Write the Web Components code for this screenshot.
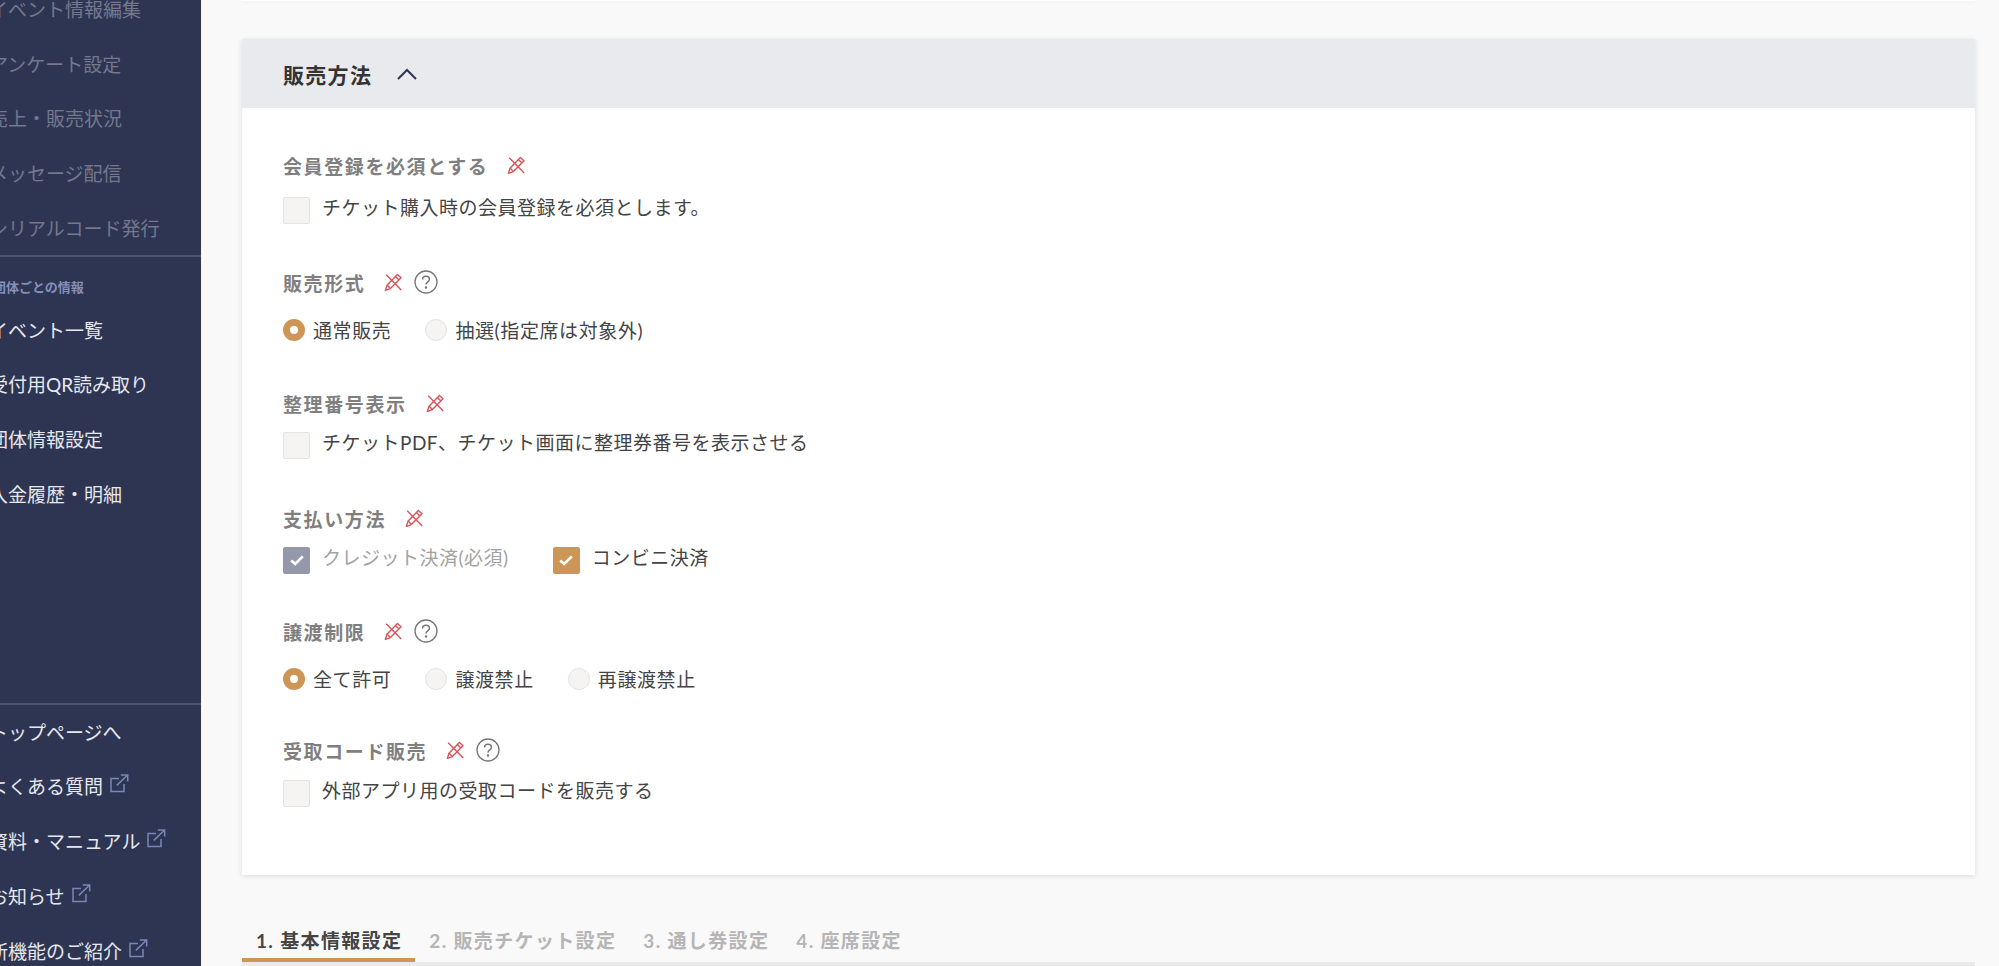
<!DOCTYPE html>
<html lang="ja">
<head>
<meta charset="utf-8">
<title>販売方法</title>
<style>
  html, body { margin: 0; height: 100%; overflow: hidden; }
  body {
    font-family: Lato, "Noto Sans CJK JP", sans-serif;
    background: #f9f9f9;
  }
</style>
</head>
<body>
<app-shell>
  <side-nav slot="nav"></side-nav>
  <top-sliver></top-sliver>
  <sales-panel heading="販売方法">
    <form-field label="会員登録を必須とする" style="--gap:19px">
      <check-box>チケット購入時の会員登録を必須とします。</check-box>
    </form-field>
    <form-field label="販売形式" help style="--top:45px;--gap:21px">
      <radio-item on>通常販売</radio-item>
      <radio-item>抽選(指定席は対象外)</radio-item>
    </form-field>
    <form-field label="整理番号表示" style="--top:47px;--gap:16px">
      <check-box>チケットPDF、チケット画面に整理券番号を表示させる</check-box>
    </form-field>
    <form-field label="支払い方法" style="--top:46px;--gap:16px;--ctl-gap:44px">
      <check-box state="locked">クレジット決済(必須)</check-box>
      <check-box state="on">コンビニ決済</check-box>
    </form-field>
    <form-field label="譲渡制限" help style="--top:44px;--gap:21px">
      <radio-item on>全て許可</radio-item>
      <radio-item>譲渡禁止</radio-item>
      <radio-item>再譲渡禁止</radio-item>
    </form-field>
    <form-field label="受取コード販売" help style="--top:45px;--gap:17px">
      <check-box>外部アプリ用の受取コードを販売する</check-box>
    </form-field>
  </sales-panel>
  <step-tabs></step-tabs>
</app-shell>

<script>
// small helper so every element sets up its shadow root the same way
class Base extends HTMLElement {
  constructor(){
    super()
    this.attachShadow({mode: 'open'})
  }
  connectedCallback(){
    this.shadowRoot.innerHTML = this.template
  }
}

const pencilIcon = /* html */`
  <svg width="19" height="19" viewBox="0 0 19 19" fill="none" stroke="#d9535a" stroke-width="1.4" stroke-linejoin="round" aria-hidden="true">
    <path d="M13.4 1.4l3.6 3.4-10.6 10.8-5 1.8 1.6-5.2z"/>
    <path d="M11.4 3.4l3.6 3.5M3 12l3.4 3.6"/>
    <path d="M2.2 1.8l15 15.2"/>
  </svg>`

const helpIcon = /* html */`
  <svg width="24" height="24" viewBox="0 0 24 24" fill="none" stroke="#777" stroke-width="1.3" aria-hidden="true">
    <circle cx="12" cy="12" r="11"/>
    <path d="M8.6 9.4c0-2 1.5-3.2 3.4-3.2s3.4 1.2 3.4 3c0 2.7-3.4 2.6-3.4 5.4" stroke-width="1.5"/>
    <circle cx="12" cy="17.6" r=".6" fill="#777"/>
  </svg>`

const externalIcon = /* html */`
  <svg width="19" height="19" viewBox="0 0 19 19" fill="none" stroke="#7887b8" stroke-width="1.5" aria-hidden="true">
    <path d="M9 4.5H1v13h13V10"/>
    <path d="M6.8 11.4L17.4 1.2M10.8 1h6.9v6.5"/>
  </svg>`

class AppShell extends Base {
  get template(){ return /* html */`
    <style>
      :host { display: flex; width: 1999px; height: 966px; overflow: hidden; }
      .nav { flex: 0 0 201px; }
      main { flex: 1; min-width: 0; padding: 0 24px 0 41px; display: flex; flex-direction: column; }
    </style>
    <div class="nav"><slot name="nav"></slot></div>
    <main><slot></slot></main>
  `}
}

class SideNav extends Base {
  get template(){
    const row = ([text, ext]) => `<a>${text}${ext ? externalIcon : ''}</a>`
    const muted = ['イベント情報編集', 'アンケート設定', '売上・販売状況', 'メッセージ配信', 'シリアルコード発行']
    const org = ['イベント一覧', '受付用QR読み取り', '団体情報設定', '入金履歴・明細']
    const help = [['トップページへ'], ['よくある質問', 1], ['資料・マニュアル', 1], ['お知らせ', 1], ['新機能のご紹介', 1]]
    return /* html */`
    <style>
      :host { display: block; width: 201px; height: 966px; background: #2e3552; overflow: hidden; }
      .inner { display: flex; flex-direction: column; height: 996.5px; margin-top: -19px; }
      a { display: flex; align-items: center; gap: 7px; height: 54.75px; flex: none; margin-left: -11px; font-size: 19px; color: #e6e8ef; white-space: nowrap; }
      a svg { flex: none; margin-top: -4px; }
      .muted a { color: #73788c; }
      hr { margin: 0; border: 0; border-top: 2px solid #4c526a; flex: none; }
      hr.bottom { margin-bottom: -1.5px; }
      h4 { margin: 21px 0 5px -7px; font-size: 13px; line-height: 19px; font-weight: 700; color: #8590bc; flex: none; white-space: nowrap; }
      .spacer { flex: 1; }
    </style>
    <div class="inner">
      <div class="muted">${muted.map(t => row([t])).join('')}</div>
      <hr>
      <h4>団体ごとの情報</h4>
      <div>${org.map(t => row([t])).join('')}</div>
      <div class="spacer"></div>
      <hr class="bottom">
      <div>${help.map(row).join('')}</div>
    </div>
  `}
}

class TopSliver extends Base {
  get template(){ return /* html */`
    <style>
      :host { display: block; height: 1px; margin-bottom: 38px; background: #fff; box-shadow: 0 1px 4px rgba(0,0,0,.08); flex: none; }
    </style>
  `}
}

class SalesPanel extends Base {
  get template(){ return /* html */`
    <style>
      :host { display: block; background: #fff; height: 836px; flex: none; box-shadow: 0 1px 5px rgba(0,0,0,.12); }
      header { display: flex; align-items: center; gap: 25px; height: 69px; padding-left: 41px; background: #e9eaee; }
      h2 { margin: 1px 0 0; font-size: 21px; font-weight: 700; letter-spacing: 1.3px; color: #333; }
      .body { padding: 44px 41px 0; }
    </style>
    <header>
      <h2>${this.getAttribute('heading')}</h2>
      <svg width="20" height="12" viewBox="0 0 20 12" fill="none" stroke="#2e3552" stroke-width="2"><path d="M1 11l9-9 9 9"/></svg>
    </header>
    <div class="body"><slot></slot></div>
  `}
}

class FormField extends Base {
  get template(){ return /* html */`
    <style>
      :host { display: block; margin-top: var(--top, 0); }
      .label { display: flex; align-items: center; height: 26px; font-size: 19px; font-weight: 700; letter-spacing: 1.6px; color: #7f7f7f; }
      .pencil { display: inline-flex; margin-left: 19px; }
      .help { display: inline-flex; margin-left: 11px; }
      .controls { display: flex; align-items: center; gap: var(--ctl-gap, 34px); margin-top: var(--gap, 18px); }
    </style>
    <div class="label">
      <span>${this.getAttribute('label')}</span>
      <span class="pencil">${pencilIcon}</span>
      ${this.hasAttribute('help') ? `<span class="help">${helpIcon}</span>` : ''}
    </div>
    <div class="controls"><slot></slot></div>
  `}
}

class CheckBox extends Base {
  get template(){
    const state = this.getAttribute('state')
    return /* html */`
    <style>
      :host { display: inline-flex; align-items: center; gap: 12px; font-size: 19px; letter-spacing: .5px; color: #444; }
      :host([state="locked"]) { color: #a3a3a3; }
      .box { box-sizing: border-box; width: 27px; height: 27px; flex: none; border-radius: 2px; border: 1px solid #e4e2e2; background: #f6f3f3; display: flex; align-items: center; justify-content: center; }
      :host([state="on"]) .box { background: #cd9657; border-color: #cd9657; }
      :host([state="locked"]) .box { background: #9399ab; border-color: #9399ab; }
      /* the label sits a little above the centre of the box */
      .text { margin-top: -9px; }
    </style>
    <span class="box">${state ? `<svg width="14" height="11" viewBox="0 0 14 11" fill="none" stroke="#fff" stroke-width="2.7"><path d="M1.2 5.4l4 3.6 7.6-7.6"/></svg>` : ''}</span>
    <span class="text"><slot></slot></span>
  `}
}

class RadioItem extends Base {
  get template(){ return /* html */`
    <style>
      :host { display: inline-flex; align-items: center; gap: 8px; font-size: 19px; letter-spacing: .6px; color: #444; }
      .dot { box-sizing: border-box; width: 22px; height: 22px; flex: none; border-radius: 50%; border: 1px solid #e4e2e2; background: #f6f3f3; }
      :host([on]) .dot { border: 7.5px solid #cd9657; background: #fff; }
    </style>
    <span class="dot"></span>
    <span><slot></slot></span>
  `}
}

class StepTabs extends Base {
  get template(){
    const steps = ['1. 基本情報設定', '2. 販売チケット設定', '3. 通し券設定', '4. 座席設定']
    return /* html */`
    <style>
      :host { display: flex; margin-top: 40px; height: 47px; flex: none; border-bottom: 4px solid #eaeaea; }
      a { display: flex; align-items: center; padding: 6px 13px 0 14px; font-size: 19px; font-weight: 700; letter-spacing: 1.35px; color: #b5b5b5; white-space: nowrap; border-bottom: 4px solid transparent; }
      a:first-of-type { color: #444; border-bottom-color: #cd9657; }
    </style>
    ${steps.map(s => `<a>${s}</a>`).join('')}
  `}
}

customElements.define('app-shell', AppShell)
customElements.define('side-nav', SideNav)
customElements.define('top-sliver', TopSliver)
customElements.define('sales-panel', SalesPanel)
customElements.define('form-field', FormField)
customElements.define('check-box', CheckBox)
customElements.define('radio-item', RadioItem)
customElements.define('step-tabs', StepTabs)
</script>
</body>
</html>
